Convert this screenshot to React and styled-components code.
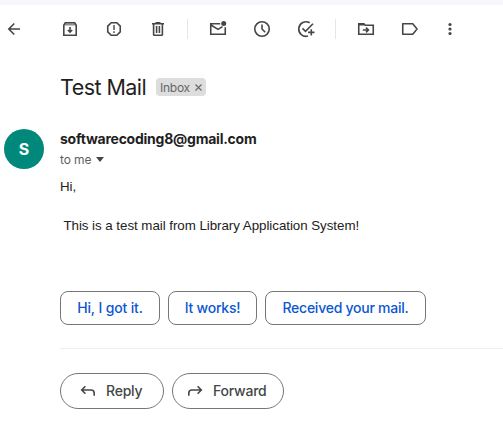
import React from "react";
import styled, { createGlobalStyle } from "styled-components";

const Global = createGlobalStyle`
  * { box-sizing: border-box; }
  body { margin: 0; background: #fff; overflow: hidden; }
`;
const Page = styled.main`
  height: 423px;
  overflow: hidden;
  border-top: 5px solid #f6f8fc;
  background: #fff;
  color: #1f1f1f;
  font-family: Inter, "Open Sans", sans-serif;
`;
const Toolbar = styled.nav`
  display: flex;
  align-items: center;
  height: 48px;
  padding-left: 4px;
`;
const Group = styled.div`
  display: flex;
  gap: 24px;
  margin-left: ${(p) => p.$offset || 0}px;
`;
const IconButton = styled.button`
  display: flex;
  width: 20px;
  height: 20px;
  padding: 0;
  border: 0;
  background: none;
  color: #444746;
`;
const Glyph = styled.svg`
  display: block;
  width: 20px;
  height: 20px;
  fill: none;
  stroke: currentColor;
  stroke-width: 1.6;
`;
const Divider = styled.span`
  width: 1px;
  height: 20px;
  margin-left: 19px;
  background: #e6e6e6;
`;
const Subject = styled.header`
  display: flex;
  align-items: center;
  height: 30px;
  margin: 19px 0 0 60px;
`;
const Title = styled.h1`
  width: 96px;
  margin: 0;
  font-size: 21.5px;
  line-height: 30px;
  font-weight: 400;
  letter-spacing: -0.55px;
  white-space: nowrap;
`;
const Label = styled.span`
  display: flex;
  align-items: center;
  width: 50px;
  height: 18px;
  padding-left: 4px;
  border-radius: 4px;
  background: #ddd;
  color: #666;
  font-size: 12px;
  letter-spacing: -0.25px;
`;
const Cross = styled.svg`
  width: 7px;
  height: 7px;
  margin-left: auto;
  margin-right: 4px;
  stroke: #666;
  stroke-width: 1.1;
`;
const Sender = styled.section`
  display: flex;
  gap: 16px;
  height: 42px;
  margin: 27px 0 0 4px;
`;
const Avatar = styled.div`
  display: grid;
  place-items: center;
  width: 40px;
  height: 40px;
  border-radius: 50%;
  background: #00897b;
  color: #fff;
  font-size: 16px;
  font-weight: 700;
`;
const Address = styled.div`
  font-size: 14px;
  line-height: 20px;
  font-weight: 700;
  letter-spacing: -0.24px;
`;
const Recipient = styled.div`
  display: flex;
  align-items: center;
  gap: 5px;
  height: 20px;
  color: #5e5e5e;
  font-size: 12px;
  letter-spacing: -0.1px;
`;
const Caret = styled.span`
  border: 4.5px solid transparent;
  border-top: 5px solid #444746;
  border-bottom: 0;
`;
const Body = styled.div`
  height: 114px;
  margin: 6px 0 0 60px;
  color: #222;
  font: 13.33px/20px "Liberation Sans", Arial, sans-serif;
  white-space: pre;
`;
const Line = styled.p`
  margin: 0 0 19px;
  letter-spacing: -0.04px;
`;
const Suggestions = styled.div`
  display: flex;
  gap: 8px;
  margin-left: 60px;
`;
const Suggestion = styled.button`
  width: ${(p) => p.$width}px;
  height: 34px;
  padding: 0;
  border: 1px solid #747775;
  border-radius: 8px;
  background: #fff;
  color: #0b57d0;
  font: 550 14px/32px Inter, sans-serif;
  letter-spacing: ${(p) => p.$tracking}px;
  white-space: nowrap;
`;
const Rule = styled.hr`
  height: 1px;
  margin: 23px 0 24px 60px;
  border: 0;
  background: #e9eef6;
`;
const Actions = styled.div`
  display: flex;
  gap: 8px;
  margin-left: 60px;
`;
const Action = styled.button`
  display: flex;
  align-items: center;
  gap: 8px;
  width: ${(p) => p.$width}px;
  height: 36px;
  padding: 0 0 0 ${(p) => p.$inset}px;
  border: 1px solid #747775;
  border-radius: 18px;
  background: #fff;
  color: #444746;
  font: 500 14px/34px Inter, sans-serif;
  letter-spacing: -0.22px;
`;

const shapes = {
  back: <path d="M16 10H5M10.3 4.5 4.8 10l5.5 5.5" />,
  archive: (
    <>
      <path d="M4 5.5h12" stroke="#8f9190" strokeWidth="2" />
      <path d="M3.8 6.2 5.3 3.8h9.4l1.5 2.4v10H3.8z" />
      <path d="M10 8v5M7.8 11 10 13.2l2.2-2.2" />
    </>
  ),
  spam: (
    <>
      <path d="M7.2 3.75h5.6l3.45 3.45v5.6l-3.45 3.45H7.2L3.75 12.8V7.2z" />
      <path d="M10 6v5M10 12.3V14" strokeWidth="1.4" />
    </>
  ),
  trash: (
    <>
      <path d="M4 4.8h12M7.5 3.8h5M5.6 5v10.6q0 .7.7.7h7.4q.7 0 .7-.7V5" />
      <path d="M8.6 7v7M11.4 7v7" />
    </>
  ),
  unread: (
    <>
      <path d="M12.2 4.75H2.75v10.5h14.5V8.2M3 6l7 4.4 4.5-2.8" />
      <circle cx="15.7" cy="4.6" r="2.5" fill="currentColor" stroke="none" />
    </>
  ),
  clock: (
    <>
      <circle cx="10" cy="10" r="7.25" />
      <path d="M10 5.5V10l3.2 3.2" />
    </>
  ),
  task: (
    <>
      <path d="M13.7 3.8A7.25 7.25 0 1 0 12 17M6.5 9.4l3 3 7.5-7.7" />
      <path d="M15.3 10.2v6.4M12.1 13.4h6.4" />
    </>
  ),
  folder: (
    <>
      <path d="M2.75 15.25V4.75h5l1.5 1.5h8v9z" />
      <path d="M3 5.5h5.5" strokeWidth="2" />
      <path d="M6.8 11h5.4M10 8.6l2.4 2.4-2.4 2.4" />
    </>
  ),
  label: <path d="M2.75 4.75h10l4.3 5.25-4.3 5.25h-10z" strokeLinejoin="round" />,
  more: (
    <g fill="currentColor" stroke="none">
      <circle cx="10" cy="5.5" r="1.6" />
      <circle cx="10" cy="10" r="1.6" />
      <circle cx="10" cy="14.5" r="1.6" />
    </g>
  ),
  reply: <path d="M7.4 5.3 3.7 9l3.7 3.7M4 9h9q3.2 0 3.2 3.2v2.6" />,
  forward: <path d="M12.6 5.3 16.3 9l-3.7 3.7M16 9H7q-3.2 0-3.2 3.2v2.6" />,
};

const Icon = ({ name }) => (
  <Glyph viewBox="0 0 20 20" aria-hidden="true">{shapes[name]}</Glyph>
);
const Tool = ({ name }) => (
  <IconButton aria-label={name}><Icon name={name} /></IconButton>
);

export default function App() {
  return (
    <>
      <Global />
      <Page>
        <Toolbar>
          <Tool name="back" />
          <Group $offset={36}>
            <Tool name="archive" /><Tool name="spam" /><Tool name="trash" />
          </Group>
          <Divider />
          <Group $offset={20}>
            <Tool name="unread" /><Tool name="clock" /><Tool name="task" />
          </Group>
          <Divider />
          <Group $offset={20}>
            <Tool name="folder" /><Tool name="label" />
          </Group>
          <Group $offset={20}><Tool name="more" /></Group>
        </Toolbar>
        <Subject>
          <Title>Test Mail</Title>
          <Label>
            Inbox
            <Cross viewBox="0 0 7 7"><path d="m.5.5 6 6m0-6-6 6" /></Cross>
          </Label>
        </Subject>
        <Sender>
          <Avatar>S</Avatar>
          <div>
            <Address>softwarecoding8@gmail.com</Address>
            <Recipient>to me <Caret /></Recipient>
          </div>
        </Sender>
        <Body>
          <Line>Hi,</Line>
          <Line>{" This is a test mail from Library Application System!"}</Line>
        </Body>
        <Suggestions>
          <Suggestion $width={100} $tracking={-0.14}>Hi, I got it.</Suggestion>
          <Suggestion $width={89} $tracking={-0.22}>It works!</Suggestion>
          <Suggestion $width={161} $tracking={-0.25}>Received your mail.</Suggestion>
        </Suggestions>
        <Rule />
        <Actions>
          <Action $width={104} $inset={17}><Icon name="reply" />Reply</Action>
          <Action $width={112} $inset={12}><Icon name="forward" />Forward</Action>
        </Actions>
      </Page>
    </>
  );
}
